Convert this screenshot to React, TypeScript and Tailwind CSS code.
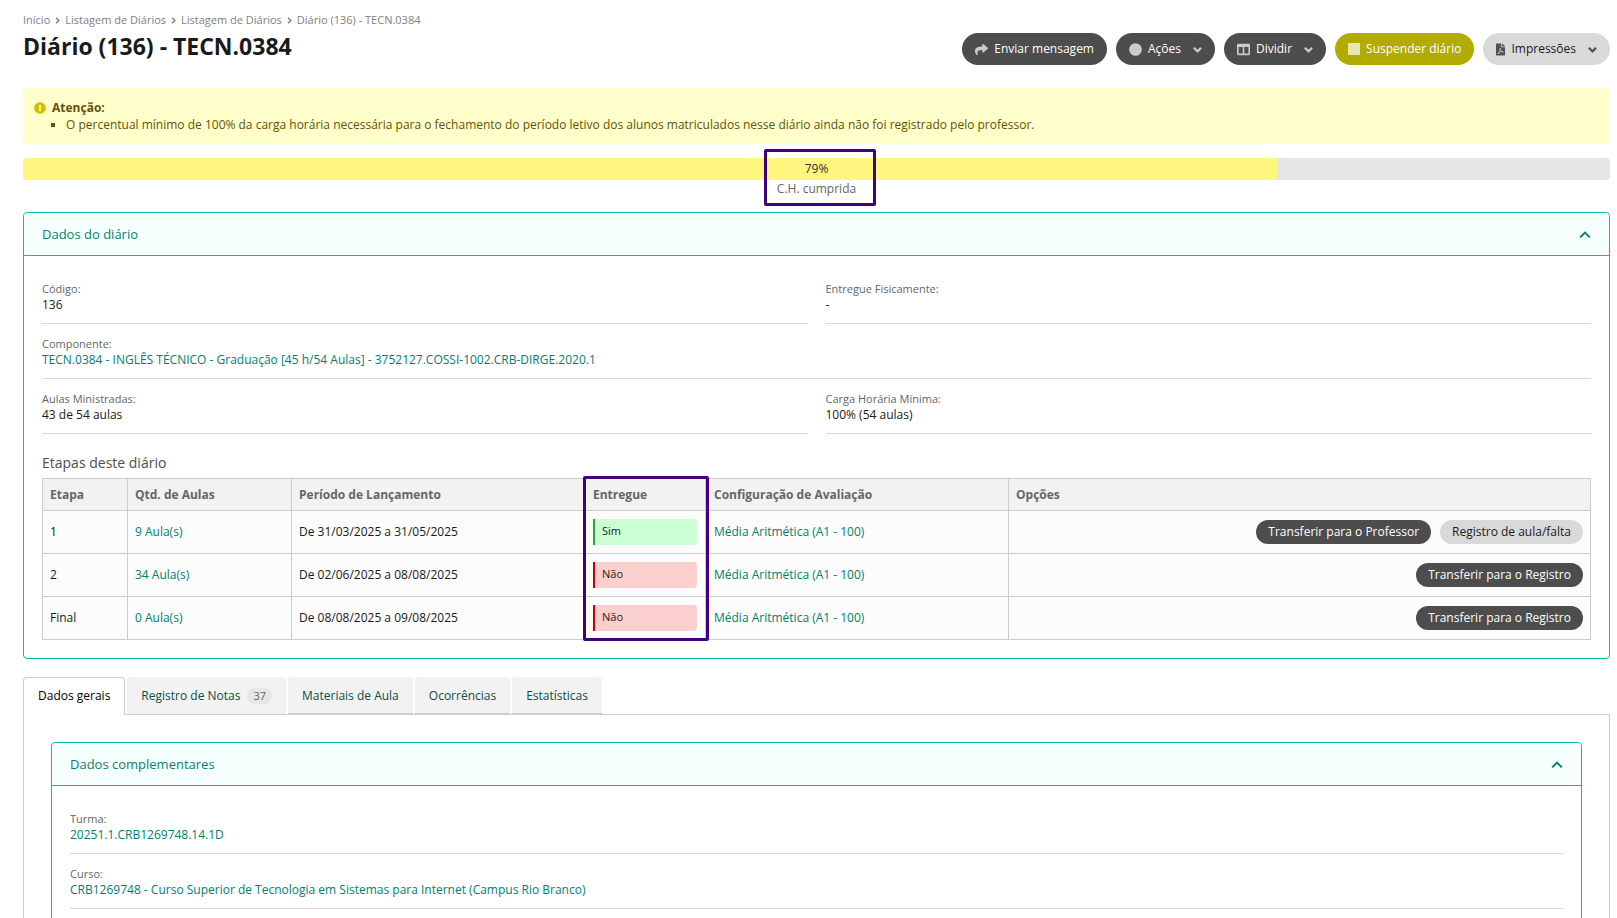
import type { ReactNode } from "react";
import { FaShare, FaCircle, FaColumns, FaFilePdf, FaExclamationCircle } from "react-icons/fa";

const breadcrumbs = ["Início", "Listagem de Diários", "Listagem de Diários", "Diário (136) - TECN.0384"];

const steps = [
    {
        name: "1",
        classes: "9 Aula(s)",
        period: "De 31/03/2025 a 31/05/2025",
        delivered: true,
        actions: [
            { label: "Transferir para o Professor", dark: true },
            { label: "Registro de aula/falta", dark: false }
        ]
    },
    {
        name: "2",
        classes: "34 Aula(s)",
        period: "De 02/06/2025 a 08/08/2025",
        delivered: false,
        actions: [{ label: "Transferir para o Registro", dark: true }]
    },
    {
        name: "Final",
        classes: "0 Aula(s)",
        period: "De 08/08/2025 a 09/08/2025",
        delivered: false,
        actions: [{ label: "Transferir para o Registro", dark: true }]
    }
];

const tabs = [
    { label: "Registro de Notas", count: 37 },
    { label: "Materiais de Aula" },
    { label: "Ocorrências" },
    { label: "Estatísticas" }
];

function Chevron({ className }: { className: string }) {
    return (
        <svg viewBox="0 0 10 10" className={className} fill="none" stroke="currentColor">
            <path d="M1 3l4 4 4-4" />
        </svg>
    );
}

function ActionButton({ color, icon, label, menu }: { color: string; icon: ReactNode; label: string; menu?: boolean }) {
    return (
        <button className={`flex h-8 items-center rounded-full px-[13px] ${color}`}>
            <span className="mr-[6px] text-[13px] opacity-70">{icon}</span>
            {label}
            {menu && <Chevron className="ml-3 w-[9px] stroke-[2.5] opacity-70" />}
        </button>
    );
}

function Panel({ title, children }: { title: string; children: ReactNode }) {
    return (
        <section className="rounded border border-[#00bfa5]">
            <h2 className="border-b border-[#00bfa5]">
                <button className="flex h-[42px] w-full items-center justify-between rounded-t bg-[#f5fffe] px-[18px] pt-[2px] text-[13px] text-[#0b7f6f]">
                    {title}
                    <Chevron className="w-3 rotate-180 stroke-[1.7]" />
                </button>
            </h2>
            <div className="px-[18px] pt-[13px] pb-[18px]">{children}</div>
        </section>
    );
}

function Field({ label, link, children }: { label: string; link?: boolean; children: ReactNode }) {
    return (
        <div className="border-b border-[#d9d9d9] pt-3 pb-[10px]">
            <dt className="text-[11px] leading-4 text-[#666]">{label}</dt>
            <dd className="leading-4">
                {link ? <a href="#" className="text-[#007f6e]">{children}</a> : children}
            </dd>
        </div>
    );
}

export default function App() {
    return (
        <main className="h-screen overflow-hidden bg-white pt-3 pr-[7px] pl-[23px] font-['Open_Sans',sans-serif] text-xs text-[#1a1a1a]">
            {/* Title bar */}
            <header className="flex items-start justify-between">
                <div>
                    <nav className="flex items-center text-[11px] leading-4 text-[#808080]">
                        {breadcrumbs.map((item, index) => (
                            <span key={index} className="flex items-center">
                                {index > 0 && <Chevron className="mx-1 w-[7px] -rotate-90 stroke-2" />}
                                <a href="#">{item}</a>
                            </span>
                        ))}
                    </nav>
                    <h1 className="mt-[2px] text-[23px] leading-8 font-bold">Diário (136) - TECN.0384</h1>
                </div>
                <div className="mt-[21px] flex gap-[9px]">
                    <ActionButton color="bg-[#4d4d4d] text-white" icon={<FaShare />} label="Enviar mensagem" />
                    <ActionButton color="bg-[#4d4d4d] text-white" icon={<FaCircle />} label="Ações" menu />
                    <ActionButton color="bg-[#4d4d4d] text-white" icon={<FaColumns />} label="Dividir" menu />
                    <ActionButton color="bg-[#b2ac00] text-white" icon={<span className="block size-3 rounded-[1px] bg-white" />} label="Suspender diário" />
                    <ActionButton color="bg-[#d9d9d9] text-[#1a1a1a]" icon={<FaFilePdf className="w-[9px]" />} label="Impressões" menu />
                </div>
            </header>

            {/* Warning */}
            <div className="mt-[23px] rounded bg-[#ffffcc] pt-3 pb-[11px] pl-[11px] text-[#665200]">
                <p className="flex items-center leading-4 font-bold">
                    <FaExclamationCircle className="mr-[6px] text-[#ccc200]" />
                    Atenção:
                </p>
                <ul className="mt-px list-[square] pl-8 leading-4">
                    <li>O percentual mínimo de 100% da carga horária necessária para o fechamento do período letivo dos alunos matriculados nesse diário ainda não foi registrado pelo professor.</li>
                </ul>
            </div>

            {/* Progress */}
            <div className="relative mt-[14px] text-center">
                <div className="h-[22px] rounded bg-[#e6e6e6]">
                    <div className="h-full w-[79%] rounded bg-[#fff680]" />
                </div>
                <p className="absolute inset-x-0 top-0 leading-[22px] text-[#333]">79%</p>
                <p className="pt-px leading-4 text-[#666]">C.H. cumprida</p>
                <div className="absolute -top-[9px] left-1/2 -ml-[53px] h-[57px] w-28 rounded-xs border-3 border-[#400080]" />
            </div>

            <div className="mt-[15px]">
                <Panel title="Dados do diário">
                    <dl className="grid grid-cols-2 gap-x-[18px]">
                        <Field label="Código:">136</Field>
                        <Field label="Entregue Fisicamente:">-</Field>
                        <div className="col-span-2">
                            <Field label="Componente:" link>TECN.0384 - INGLÊS TÉCNICO - Graduação [45 h/54 Aulas] - 3752127.COSSI-1002.CRB-DIRGE.2020.1</Field>
                        </div>
                        <Field label="Aulas Ministradas:">43 de 54 aulas</Field>
                        <Field label="Carga Horária Mínima:">100% (54 aulas)</Field>
                    </dl>

                    <h3 className="mt-[19px] mb-[5px] text-sm leading-5 text-[#4d4d4d]">Etapas deste diário</h3>
                    <div className="relative">
                        <table className="w-full table-fixed border-collapse border border-[#ccc] border-b-[#b3b3b3] bg-[#fcfcfc] text-left">
                            <thead className="bg-[#f2f2f2] text-[#666]">
                                <tr className="h-8">
                                    <th className="w-[85px] border border-[#ccc] px-[7px]">Etapa</th>
                                    <th className="w-[164px] border border-[#ccc] px-[7px]">Qtd. de Aulas</th>
                                    <th className="w-[293px] border border-[#ccc] px-[7px]">Período de Lançamento</th>
                                    <th className="w-[121px] border border-[#ccc] px-2">Entregue</th>
                                    <th className="w-[303px] border border-[#ccc] px-2">Configuração de Avaliação</th>
                                    <th className="border border-[#ccc] px-[7px]">Opções</th>
                                </tr>
                            </thead>
                            <tbody>
                                {steps.map((step) => (
                                    <tr key={step.name} className="h-[43px]">
                                        <td className="border border-[#ccc] px-[7px]">{step.name}</td>
                                        <td className="border border-[#ccc] px-[7px]">
                                            <a href="#" className="text-[#007f6e]">{step.classes}</a>
                                        </td>
                                        <td className="border border-[#ccc] px-[7px]">{step.period}</td>
                                        <td className="border border-[#ccc] px-2">
                                            <div className={`h-[26px] rounded-r border-l-2 pl-[7px] text-[11px] leading-6 ${step.delivered ? "border-[#1fad33] bg-[#ccffd4]" : "border-[#c70000] bg-[#fccfcf]"}`}>
                                                {step.delivered ? "Sim" : "Não"}
                                            </div>
                                        </td>
                                        <td className="border border-[#ccc] px-2">
                                            <a href="#" className="text-[#007f6e]">Média Aritmética (A1 - 100)</a>
                                        </td>
                                        <td className="border border-[#ccc] px-[7px]">
                                            <div className="flex justify-end gap-[9px]">
                                                {step.actions.map((action) => (
                                                    <button key={action.label} className={`h-6 rounded-full px-3 ${action.dark ? "bg-[#4d4d4d] text-white" : "bg-[#d9d9d9]"}`}>
                                                        {action.label}
                                                    </button>
                                                ))}
                                            </div>
                                        </td>
                                    </tr>
                                ))}
                            </tbody>
                        </table>
                        <div className="absolute -top-[2px] -bottom-px left-[541px] w-[126px] rounded-xs border-3 border-[#400080]" />
                    </div>
                </Panel>
            </div>

            {/* Tabs */}
            <div role="tablist" className="mt-[18px] flex h-[37px] gap-[2px]">
                <button role="tab" aria-selected="true" className="z-10 -mb-px rounded-t border border-b-0 border-[#ccc] bg-white px-[14px] pb-[2px] text-black">Dados gerais</button>
                {tabs.map((tab) => (
                    <button key={tab.label} role="tab" aria-selected="false" className={`flex items-center rounded-t bg-[#f2f2f2] px-[14px] text-[#0b4f45] ${tab.count ? "" : "border-b border-[#ccc] pt-[2px]"}`}>
                        {tab.label}
                        {tab.count && <span className="ml-[7px] rounded-full bg-[#e6e6e6] px-[6px] text-[11px] leading-4 text-[#666]">{tab.count}</span>}
                    </button>
                ))}
            </div>
            <div className="border border-[#ccc] p-[27px]">
                <Panel title="Dados complementares">
                    <dl>
                        <Field label="Turma:" link>20251.1.CRB1269748.14.1D</Field>
                        <Field label="Curso:" link>CRB1269748 - Curso Superior de Tecnologia em Sistemas para Internet (Campus Rio Branco)</Field>
                    </dl>
                </Panel>
            </div>
        </main>
    );
}
